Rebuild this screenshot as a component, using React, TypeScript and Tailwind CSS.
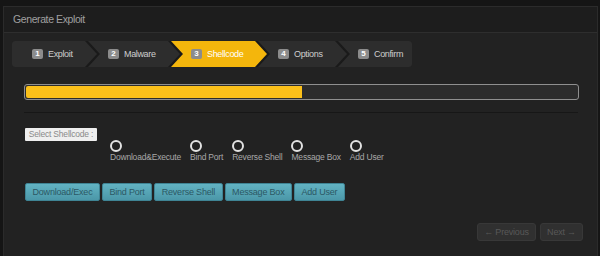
import React from 'react';

const steps = [
  { n: 1, label: 'Exploit', w: 'w-[85px]', ml: '', active: false, first: true, last: false },
  { n: 2, label: 'Malware', w: 'w-[92px]', ml: '-ml-[9px]', active: false, first: false, last: false },
  { n: 3, label: 'Shellcode', w: 'w-[96px]', ml: '-ml-[9px]', active: true, first: false, last: false },
  { n: 4, label: 'Options', w: 'w-[89px]', ml: '-ml-[9px]', active: false, first: false, last: false },
  { n: 5, label: 'Confirm', w: 'w-[74px]', ml: '-ml-[9px]', active: false, first: false, last: true },
];

const shellcodes = ['Download&Execute', 'Bind Port', 'Reverse Shell', 'Message Box', 'Add User'];
const buttons = ['Download/Exec', 'Bind Port', 'Reverse Shell', 'Message Box', 'Add User'];

function clipFor(first: boolean, last: boolean) {
  if (first) return 'polygon(0 0, calc(100% - 12px) 0, 100% 50%, calc(100% - 12px) 100%, 0 100%)';
  if (last) return 'polygon(0 0, 100% 0, 100% 100%, 0 100%, 12px 50%)';
  return 'polygon(0 0, calc(100% - 12px) 0, 100% 50%, calc(100% - 12px) 100%, 0 100%, 12px 50%)';
}

const Wizard = () => (
  <div className="flex h-[26px] w-fit rounded-[3px] bg-[#1a1a1a]">
    {steps.map((s) => (
      <div
        key={s.n}
        className={`${s.w} ${s.ml} flex h-full shrink-0 items-center pl-[20px] ${
          s.active ? 'bg-[#f4b60c] text-white' : 'bg-[#2d2d2d] text-[#cdcdcd]'
        } ${s.first ? 'rounded-l-[3px]' : ''} ${s.last ? 'rounded-r-[3px]' : ''}`}
        style={{ clipPath: clipFor(s.first, s.last) }}
      >
        <span className="flex h-[10px] w-[11px] items-center justify-center rounded-[2px] bg-[#8c8c8c] text-[8px] font-bold leading-none text-white">
          {s.n}
        </span>
        <span className="ml-[5px] text-[9px] leading-none tracking-[-0.35px]">{s.label}</span>
      </div>
    ))}
  </div>
);

export default function App() {
  return (
    <div className="h-[256px] w-[600px] overflow-hidden bg-[#151515] pl-[3px] pr-[2px] pt-[6px] font-['Liberation_Sans',Arial,sans-serif]">
      <div className="h-[260px] border border-[#2b2b2b] bg-[#222222]">
        {/* Header */}
        <div className="flex h-[26px] items-center border-b border-[#2e2e2e] bg-[#1d1d1d] pl-[9px]">
          <span className="text-[10.5px] tracking-[-0.4px] text-[#a0a0a0]">Generate Exploit</span>
        </div>

        {/* Body */}
        <div className="pl-[8px] pr-[18px] pt-[8px]">
          <Wizard />

          <div className="pl-[12px]">
            {/* Progress */}
            <div className="mt-[17px] h-[16px] w-[555px] overflow-hidden rounded-[3px] border border-[#8f8f8f] bg-[#2c2c2c] p-px">
              <div className="h-full w-[50%] rounded-l-[2px] bg-[#fbc01a]" />
            </div>

            <div className="mt-[12px] h-px w-[554px] bg-[#171717]" />

            {/* Shellcode select */}
            <div className="mt-[15px] flex items-start">
              <div className="ml-px flex h-[13px] w-[72px] items-center justify-center rounded-[1px] bg-[#efefef] text-[8.5px] leading-none tracking-[-0.2px] text-[#8a8a8a]">
                Select Shellcode :
              </div>
              <div className="ml-[13px] mt-[12px] flex gap-[9px]">
                {shellcodes.map((s) => (
                  <div key={s} className="flex flex-col items-start">
                    <span className="h-[12px] w-[12px] rounded-full border-[2.5px] border-[#e2e2e2]" />
                    <span className="mt-px text-[8.5px] leading-[9px] tracking-[-0.2px] text-[#a8a8a8]">{s}</span>
                  </div>
                ))}
              </div>
            </div>

            {/* Buttons */}
            <div className="ml-px mt-[21px] flex gap-[2px]">
              {buttons.map((b) => (
                <button
                  key={b}
                  className="h-[18px] rounded-[2px] border border-[#3f8494] bg-gradient-to-b from-[#62b3c3] to-[#4b97a8] px-[6.5px] text-[9px] leading-none tracking-[-0.2px] text-[#2c5864]"
                >
                  {b}
                </button>
              ))}
            </div>

            {/* Nav */}
            <div className="mr-[-4px] mt-[22px] flex justify-end gap-[4px]">
              <button className="h-[18px] w-[59px] rounded-[3px] border border-[#383838] bg-[#303030] text-[9px] leading-none tracking-[-0.2px] text-[#585858]">
                ← Previous
              </button>
              <button className="h-[18px] w-[43px] rounded-[3px] border border-[#383838] bg-[#303030] text-[9px] leading-none tracking-[-0.2px] text-[#585858]">
                Next →
              </button>
            </div>
          </div>
        </div>
      </div>
    </div>
  );
}
